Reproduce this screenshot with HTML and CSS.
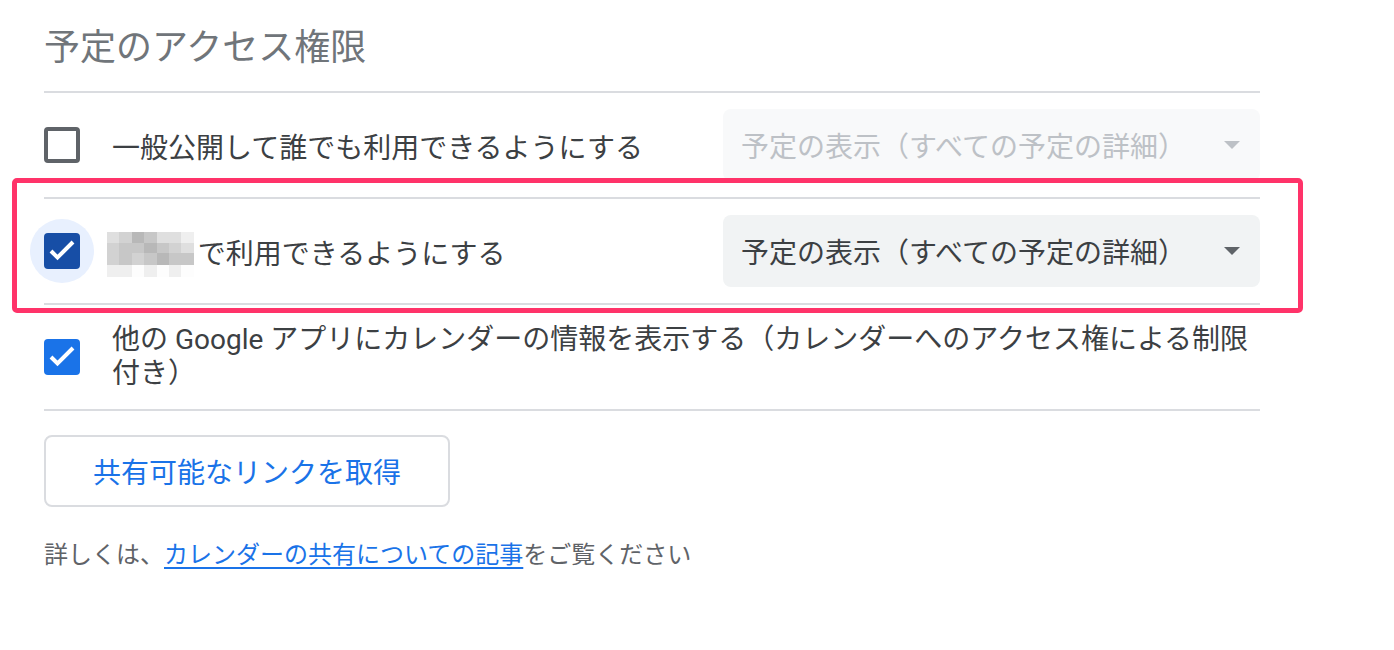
FILE: index.html
```html
<!DOCTYPE html>
<html lang="ja">
<head>
<meta charset="utf-8">
<title>予定のアクセス権限</title>
<link rel="stylesheet" href="styles.css">
</head>
<body>
<main class="panel">
  <h2 class="title">予定のアクセス権限</h2>
  <div class="list">
    <div class="row">
      <span class="cb cb-empty"></span>
      <span class="label label-single">一般公開して誰でも利用できるようにする</span>
      <div class="select select-disabled">
        <span>予定の表示（すべての予定の詳細）</span>
        <span class="arrow"></span>
      </div>
    </div>
    <div class="row row-highlight">
      <span class="cb-wrap">
        <span class="cb cb-dark">
          <svg viewBox="0 0 36 36" width="36" height="36"><path d="M7 18 L13.5 24.5 L29 9" fill="none" stroke="#fff" stroke-width="4"/></svg>
        </span>
      </span>
      <span class="label label-flex">
        <span class="mosaic" aria-hidden="true">
          <i class="g2"></i><i class="g3"></i><i class="g5"></i><i class="g4"></i><i class="g2"></i><i class="g2"></i><i class="g1"></i>
          <i class="g3"></i><i class="g4"></i><i class="g4"></i><i class="g5"></i><i class="g4"></i><i class="g3"></i><i class="g2"></i>
          <i class="g3"></i><i class="g4"></i><i class="g3"></i><i class="g4"></i><i class="g5"></i><i class="g4"></i><i class="g4"></i>
          <i class="g1"></i><i class="g1"></i><i class="g0"></i><i class="g1"></i><i class="g0"></i><i class="g1"></i><i class="g0"></i>
        </span><span class="label-single">で利用できるようにする</span></span>
      <div class="select">
        <span>予定の表示（すべての予定の詳細）</span>
        <span class="arrow"></span>
      </div>
    </div>
    <div class="row">
      <span class="cb cb-blue">
        <svg viewBox="0 0 36 36" width="36" height="36"><path d="M7 18 L13.5 24.5 L29 9" fill="none" stroke="#fff" stroke-width="4"/></svg>
      </span>
      <span class="label">他の Google アプリにカレンダーの情報を表示する（カレンダーへのアクセス権による制限付き）</span>
    </div>
  </div>
  <button class="link-btn" type="button">共有可能なリンクを取得</button>
  <p class="note">詳しくは、<a href="#">カレンダーの共有についての記事</a>をご覧ください</p>
</main>
</body>
</html>
```

FILE: styles.css
```css
body {
  margin: 0;
  background: #fff;
  font-family: Roboto, "Noto Sans CJK JP", sans-serif;
}

.panel {
  width: 1216px;
  padding: 24px 0 0 44px;
}

.title {
  margin: 0 0 19px;
  font-size: 36px;
  line-height: 48px;
  font-weight: 400;
  color: #70757a;
}

.list {
  border-top: 2px solid #dadce0;
}

.row {
  position: relative;
  display: flex;
  align-items: center;
  min-height: 72px;
  padding: 16px 0;
  border-bottom: 2px solid #dadce0;
}

.cb {
  flex: none;
  position: relative;
  z-index: 1;
  box-sizing: border-box;
  width: 36px;
  height: 36px;
  border-radius: 4px;
  margin-right: 32px;
}

.cb svg {
  display: block;
}

.cb-empty {
  border: 4px solid #5f6368;
}

.cb-dark {
  background: #174ea6;
}

.cb-blue {
  background: #1a73e8;
}

.cb-wrap {
  position: relative;
  flex: none;
  display: flex;
}

.cb-wrap::before {
  content: "";
  position: absolute;
  left: -14px;
  top: -14px;
  width: 64px;
  height: 64px;
  border-radius: 50%;
  background: #e8f0fe;
}

.label {
  flex: 1;
  font-size: 28px;
  line-height: 34px;
  color: #3c4043;
}

.label-single {
  padding-top: 7px;
}

.label-flex {
  display: flex;
  align-items: center;
}

.mosaic {
  display: grid;
  grid-template-columns: repeat(7, 12.4px);
  grid-template-rows: 11px 10px 12px 12px;
  margin: 7px 4px 0 -5px;
}

.mosaic i {
  display: block;
}

.g0 { background: #fdfdfd; }
.g1 { background: #efefef; }
.g2 { background: #dfdfdf; }
.g3 { background: #d2d2d2; }
.g4 { background: #c7c7c7; }
.g5 { background: #b8b8b8; }

.select {
  flex: none;
  box-sizing: border-box;
  width: 537px;
  height: 72px;
  display: flex;
  align-items: center;
  justify-content: space-between;
  padding: 0 20px 0 18px;
  border-radius: 8px;
  background: #f1f3f4;
  font-size: 28px;
  color: #3c4043;
}

.arrow {
  width: 0;
  height: 0;
  border-left: 8px solid transparent;
  border-right: 8px solid transparent;
  border-top: 8px solid #5f6368;
}

.select-disabled {
  background: #f8f9fa;
  color: #bdc1c6;
}

.select-disabled .arrow {
  border-top-color: #bdc1c6;
}

.row-highlight::after {
  content: "";
  position: absolute;
  top: -21px;
  bottom: -10px;
  left: -32px;
  right: -43px;
  border: 5px solid #ff3369;
  border-radius: 5px;
  pointer-events: none;
}

.link-btn {
  display: block;
  margin-top: 24px;
  width: 406px;
  height: 72px;
  padding: 0;
  border: 2px solid #dadce0;
  border-radius: 8px;
  background: #fff;
  color: #1a73e8;
  font-family: inherit;
  font-size: 28px;
}

.note {
  margin: 32px 0 0;
  font-size: 24px;
  line-height: 32px;
  color: #5f6368;
}

.note a {
  color: #1a73e8;
  text-decoration: underline;
  text-decoration-thickness: 2px;
  text-underline-offset: 4px;
}
```
